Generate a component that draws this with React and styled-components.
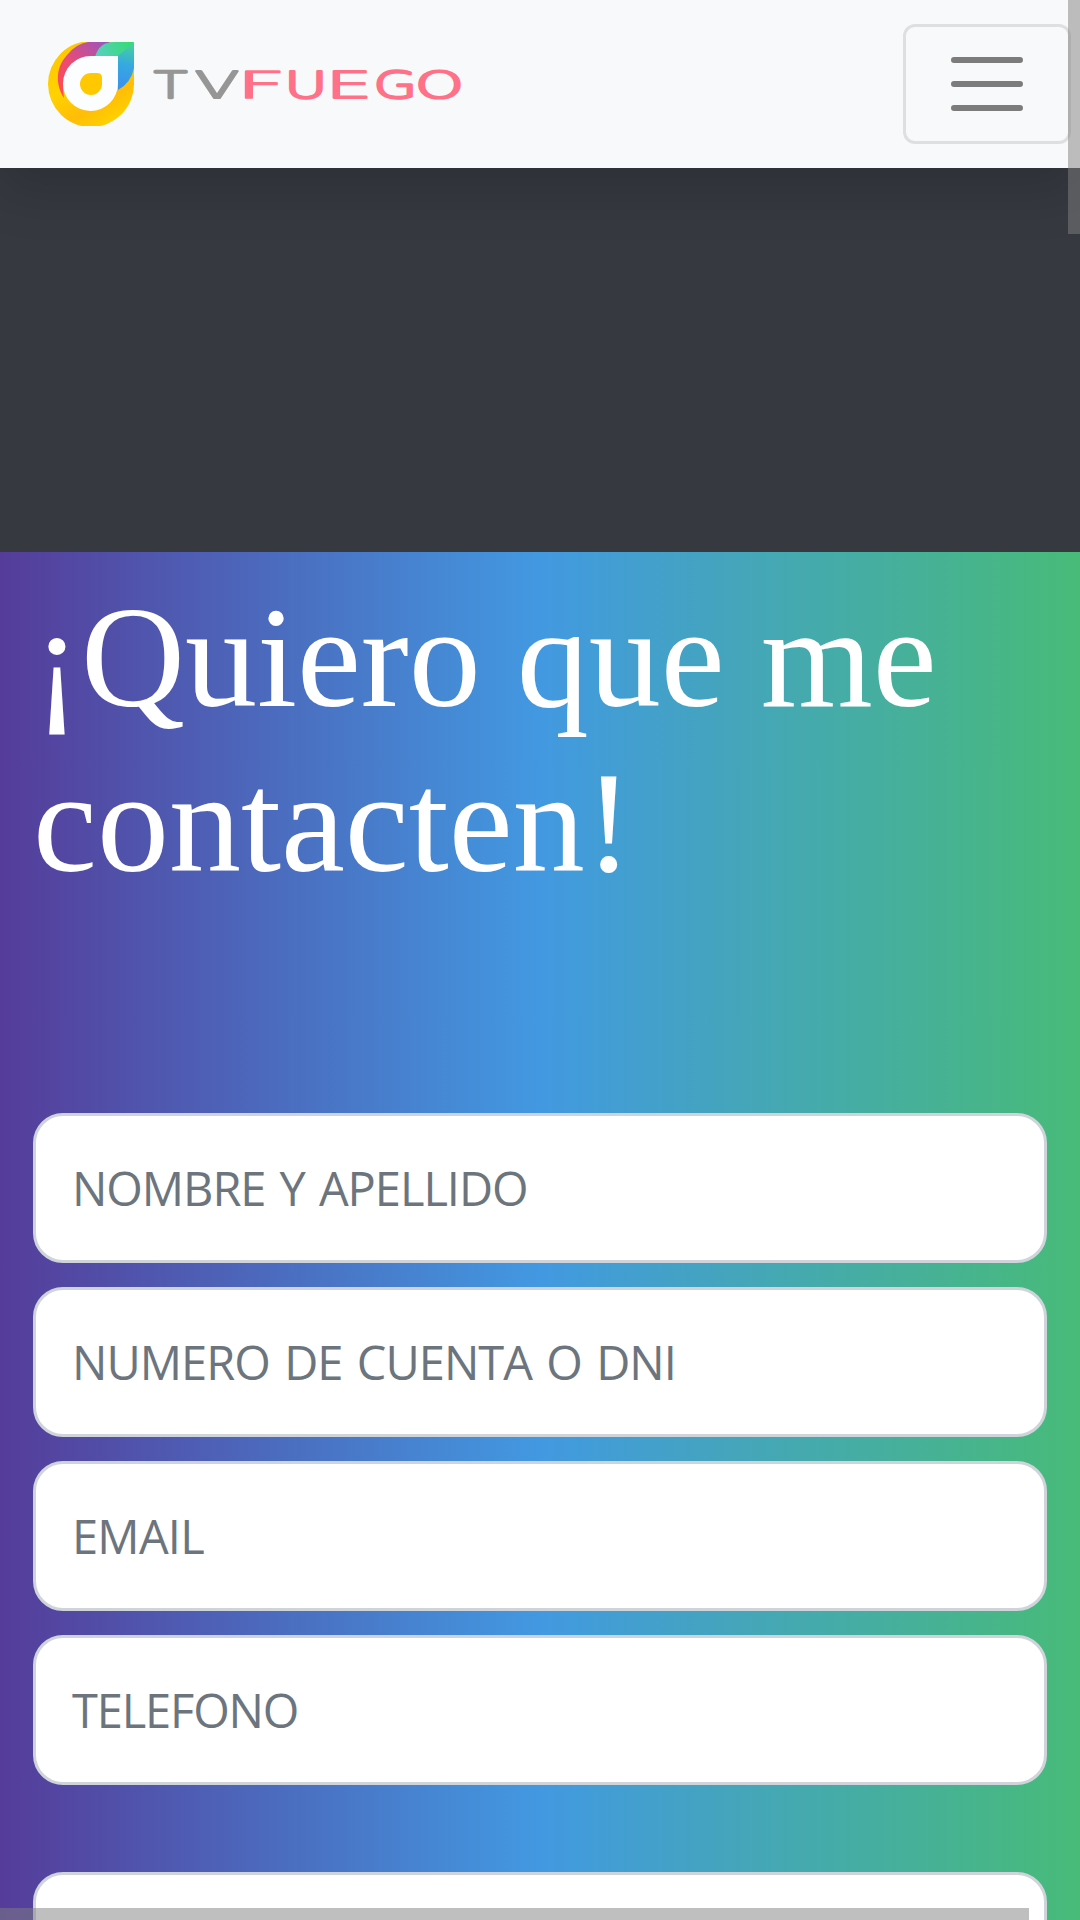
import React from "react";
import styled, { createGlobalStyle } from "styled-components";

const GlobalStyle = createGlobalStyle`
  *, *::before, *::after { box-sizing: border-box; }
  html, body { margin: 0; height: 1920px; overflow: hidden; }
  body { background: #363940; font-family: "Open Sans", sans-serif; }
`;

const Page = styled.div`
  display: flex;
  flex-direction: column;
  width: 1080px;
  height: 1920px;
  overflow: hidden;
  background: #363940;
`;

const Navbar = styled.nav`
  display: flex;
  align-items: center;
  justify-content: space-between;
  flex: none;
  height: 168px;
  padding: 0 9px 0 48px;
  background: #f8f9fa;
  box-shadow: 0 24px 48px rgba(0, 0, 0, 0.15);
`;

const Brand = styled.a`
  display: flex;
`;

const Toggler = styled.button`
  display: flex;
  align-items: center;
  justify-content: center;
  width: 168px;
  height: 120px;
  padding: 0;
  border: 3px solid rgba(0, 0, 0, 0.1);
  border-radius: 12px;
  background: transparent;
`;

const Banner = styled.div`
  flex: none;
  height: 384px;
`;

const Contact = styled.section`
  flex: none;
  height: 1368px;
  padding: 23px 33px 0;
  background: linear-gradient(to right, #553c9a, #4299e1, #48bb78);
`;

const Title = styled.h1`
  margin: 0;
  height: 538px;
  font: 400 144px/165px "Liberation Serif", "Times New Roman", serif;
  color: #fff;
`;

const Form = styled.form`
  display: flex;
  flex-direction: column;
  gap: 24px;
`;

const Field = styled.input`
  width: 100%;
  height: 150px;
  margin-top: ${(p) => (p.$spaced ? "63px" : "0")};
  padding: 0 36px;
  border: 3px solid #ced4da;
  border-radius: 30px;
  background: #fff;
  font: 400 47px "Open Sans", sans-serif;
  letter-spacing: ${(p) => p.$tracking || "-1.15px"};
  word-spacing: 3px;
  color: #495057;
  &::placeholder { color: #6c757d; opacity: 1; }
`;

const ScrollThumb = styled.div`
  position: fixed;
  background: rgba(128, 128, 128, 0.5);
  ${(p) =>
    p.$vertical
      ? "top: 0; right: 0; width: 12px; height: 234px;"
      : "left: 0; bottom: 0; width: 1029px; height: 12px;"}
`;

const LETTERS = [
  ["T", 154, 1.47],
  ["V", 195, 1.74],
  ["F", 236.3, 2.33],
  ["U", 284.3, 1.6],
  ["E", 325.5, 2],
  ["G", 373.6, 1.52],
  ["O", 415, 1.68],
];

const Letter = styled.text`
  font: 200 37px "DejaVu Sans", sans-serif;
  fill: ${(p) => p.$color};
  stroke: ${(p) => p.$color};
  stroke-width: 3px;
  stroke-linejoin: round;
  vector-effect: non-scaling-stroke;
`;

function Logo() {
  return (
    <svg width="415" height="84" viewBox="48 42 415 84" role="img" aria-label="TVFUEGO">
      <defs>
        <linearGradient id="gold" x1="0" y1="0" x2="0.6" y2="1">
          <stop offset="0" stopColor="#ffc400" />
          <stop offset="0.5" stopColor="#ffd200" />
          <stop offset="0.8" stopColor="#ffbd08" />
          <stop offset="1" stopColor="#ffcf00" />
        </linearGradient>
        <linearGradient id="flame" gradientUnits="userSpaceOnUse" x1="62" y1="92" x2="106" y2="42">
          <stop offset="0" stopColor="#ff4b55" />
          <stop offset="0.4" stopColor="#ec4b72" />
          <stop offset="1" stopColor="#9b55bd" />
        </linearGradient>
        <linearGradient id="leaf" gradientUnits="userSpaceOnUse" x1="96" y1="55" x2="132" y2="45">
          <stop offset="0" stopColor="#58cfc0" />
          <stop offset="1" stopColor="#35dc72" />
        </linearGradient>
        <linearGradient id="sky" gradientUnits="userSpaceOnUse" x1="130" y1="46" x2="122" y2="88">
          <stop offset="0" stopColor="#43cda2" />
          <stop offset="0.45" stopColor="#36a9e0" />
          <stop offset="1" stopColor="#3b91ee" />
        </linearGradient>
      </defs>
      <path d="M91 41H134V83A43 43 0 1 1 91 41Z" fill="url(#gold)" />
      <path d="M64 98C54 82 57 65 68 54Q76 44 88 42H110L98 57H91Q72 58 65 76Q62 86 64 98Z" fill="url(#flame)" />
      <path d="M95 57Q99 42 114 42H134L119 58Z" fill="url(#leaf)" />
      <path d="M118 56L134 42V68Q131 83 118 90Z" fill="url(#sky)" />
      <path d="M91 56H118V83.500A27.500 27.500 0 1 1 91 56Z" fill="#fcfdff" />
      <path d="M91 73H97Q102 73 102 78V84A11 11 0 1 1 91 73Z" fill="#ffc801" />
      {LETTERS.map(([glyph, x, stretch], i) => (
        <Letter
          key={glyph}
          $color={i < 2 ? "#969696" : "#ff7188"}
          transform={`translate(${x} 97.5) scale(${stretch} 1)`}
        >
          {glyph}
        </Letter>
      ))}
    </svg>
  );
}

export default function App() {
  return (
    <Page>
      <GlobalStyle />
      <Navbar>
        <Brand><Logo /></Brand>
        <Toggler aria-label="Menu">
          <svg width="90" height="90" viewBox="0 0 30 30">
            <path d="M4 7h22M4 15h22M4 23h22" stroke="rgba(0,0,0,0.5)" strokeWidth="2" strokeLinecap="round" />
          </svg>
        </Toggler>
      </Navbar>
      <Banner />
      <Contact>
        <Title>¡Quiero que me contacten!</Title>
        <Form>
          <Field placeholder="NOMBRE Y APELLIDO" $tracking="-1.05px" />
          <Field placeholder="NUMERO DE CUENTA O DNI" $tracking="-0.95px" />
          <Field placeholder="EMAIL" $tracking="-0.75px" />
          <Field placeholder="TELEFONO" />
          <Field $spaced />
        </Form>
      </Contact>
      <ScrollThumb $vertical />
      <ScrollThumb />
    </Page>
  );
}
